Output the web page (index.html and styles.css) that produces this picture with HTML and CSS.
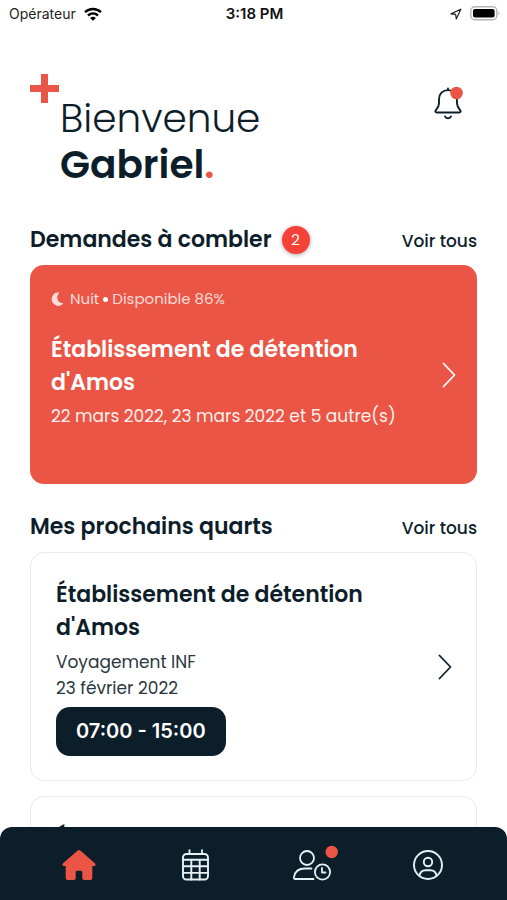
FILE: index.html
```html
<!DOCTYPE html>
<html lang="fr">
<head>
<meta charset="utf-8">
<meta name="viewport" content="width=device-width, initial-scale=1">
<title>Accueil</title>
<link rel="stylesheet" href="styles.css">
</head>
<body>
<div class="status">
  <div class="status-side">
    <span>Opérateur</span>
    <svg width="18" height="14" viewBox="0 0 18 14" aria-hidden="true">
      <g fill="none" stroke="#000" stroke-width="2.4">
        <path d="M1 5.200C5.500.9 12.500.9 17 5.200"/>
        <path d="M4 8.500c2.900-2.700 7.100-2.700 10 0"/>
      </g>
      <path d="M9 13.800 6.100 10.900c1.700-1.400 4.100-1.400 5.800 0z"/>
    </svg>
  </div>
  <strong class="clock">3:18 PM</strong>
  <div class="status-side status-end">
    <svg width="12" height="12" viewBox="0 0 12 12" fill="none" stroke="#222" stroke-width="1.200" stroke-linejoin="round" aria-hidden="true"><path d="M10.800 1.200 1 5.900l4.600.500.700 4.500z"/></svg>
    <svg width="30" height="15" viewBox="0 0 30 15" aria-hidden="true">
      <rect x=".8" y=".8" width="26" height="13" rx="4" fill="#fff" stroke="#b5b5b5" stroke-width="1.400"/>
      <rect x="3" y="3" width="21.600" height="8.600" rx="2"/>
      <path d="M28.400 5.200c1.400.6 1.400 3.600 0 4.200z" fill="#b5b5b5"/>
    </svg>
  </div>
</div>

<main class="content">
  <header class="welcome">
    <svg class="plus" width="29" height="29" viewBox="0 0 29 29" aria-hidden="true"><path d="M11 0h7v11h11v7H18v11h-7V18H0v-7h11z" fill="#ea5545"/></svg>
    <h1 class="greeting">Bienvenue<br><strong>Gabriel<span class="dot">.</span></strong></h1>
    <button class="bell" type="button" aria-label="Notifications">
      <svg width="30" height="34" viewBox="0 0 30 34" fill="none" stroke="#0d1e2b" stroke-width="1.900" stroke-linecap="round" stroke-linejoin="round" aria-hidden="true">
        <path d="M15 2.500v1.600M15 4.100c-5.400 0-9 3.900-9 9.100v4.200c0 3-1.300 4.600-3.100 6.700-1 1.200-.6 2.400.9 2.400h22.400c1.500 0 1.900-1.200.9-2.400-1.800-2.100-3.100-3.700-3.100-6.700v-4.200c0-5.200-3.600-9.100-9-9.100z"/>
        <path d="M12 30.500c.8 2.300 5.200 2.300 6 0"/>
        <circle cx="23.500" cy="7" r="6.300" fill="#ea5545" stroke="none"/>
      </svg>
    </button>
  </header>

  <section>
    <div class="section-head">
      <h2>Demandes à combler</h2>
      <span class="badge">2</span>
      <a href="#demandes">Voir tous</a>
    </div>
    <a class="card request" href="#demande">
      <div class="card-text">
        <p class="meta">
          <svg width="13" height="14" viewBox="0 0 13 14" aria-hidden="true"><path d="M8.500.6A6.600 6.600 0 1 0 12.600 11.200C7 11.600 3.900 5.200 8.500.6z" fill="#fbdcd8"/></svg>
          <span>Nuit</span><i class="sep"></i><span>Disponible 86%</span>
        </p>
        <h3>Établissement de détention d'Amos</h3>
        <p class="dates">22 mars 2022, 23 mars 2022 et 5 autre(s)</p>
      </div>
      <svg class="chevron" width="14" height="26" viewBox="0 0 14 26" fill="none" stroke="currentColor" stroke-width="1.800" stroke-linecap="round" stroke-linejoin="round" aria-hidden="true"><path d="m1.500 1.500 11 11.500-11 11.500"/></svg>
    </a>
  </section>

  <section>
    <div class="section-head">
      <h2>Mes prochains quarts</h2>
      <a href="#quarts">Voir tous</a>
    </div>
    <a class="card shift" href="#quart-1">
      <div class="card-text">
        <h3>Établissement de détention d'Amos</h3>
        <p class="detail">Voyagement INF<br>23 février 2022</p>
        <span class="hours">07:00 - 15:00</span>
      </div>
      <svg class="chevron" width="14" height="26" viewBox="0 0 14 26" fill="none" stroke="currentColor" stroke-width="1.800" stroke-linecap="round" stroke-linejoin="round" aria-hidden="true"><path d="m1.500 1.500 11 11.500-11 11.500"/></svg>
    </a>
    <a class="card shift" href="#quart-2">
      <div class="card-text">
        <h3>Établissement de détention d'Amos</h3>
      </div>
    </a>
  </section>
</main>

<nav class="tabs" aria-label="Navigation principale">
  <a href="#accueil" aria-label="Accueil" aria-current="page">
    <svg width="34" height="32" viewBox="0 0 34 32" fill="#ea5545" aria-hidden="true"><path d="M15.700 1.500a2 2 0 0 1 2.600 0L32.900 14.300c1.200 1.200.7 2.700-.9 2.700h-1.700v12c0 1.300-.8 2-2 2h-6c-1.200 0-2-.7-2-2v-5.500c0-1.100-.6-1.700-1.700-1.700h-3.200c-1.100 0-1.700.6-1.700 1.700V29c0 1.300-.8 2-2 2h-6c-1.200 0-2-.7-2-2V17H2c-1.600 0-2.100-1.500-.9-2.700z"/></svg>
  </a>
  <a href="#calendrier" aria-label="Calendrier">
    <svg width="28" height="32" viewBox="0 0 28 32" fill="none" stroke="#e6f1f6" stroke-width="1.900" stroke-linecap="round" aria-hidden="true">
      <rect x="2" y="5" width="25" height="25.500" rx="3.500"/>
      <path d="M2 10.700h25M2 17.300h25M2 23.900h25M10.300 10.700v19.800M18.700 10.700v19.800M8.500 1.300V5M21 1.300V5"/>
    </svg>
  </a>
  <a href="#disponibilites" aria-label="Disponibilités">
    <svg class="people" width="38" height="32" viewBox="0 0 38 32" fill="none" stroke="#e6f1f6" stroke-width="1.800" stroke-linecap="round" stroke-linejoin="round" aria-hidden="true">
      <circle cx="14" cy="9" r="7"/>
      <path d="M20.500 30H2c-1 0-1.200-.8-1-2C2 22 6.500 19.500 12 19.500h6.500"/>
      <circle cx="29.500" cy="23" r="7.600"/>
      <path d="M29 19v4.500h3.500"/>
      <circle cx="38.700" cy="3" r="6.200" fill="#ea5545" stroke="none"/>
    </svg>
  </a>
  <a href="#profil" aria-label="Profil">
    <svg width="32" height="32" viewBox="0 0 32 32" fill="none" stroke="#e6f1f6" stroke-width="1.900" aria-hidden="true">
      <circle cx="16" cy="16" r="14"/>
      <circle cx="16" cy="13" r="4.200"/>
      <path d="M7.500 27c.5-4 3.200-5.700 6-5.700h5c2.800 0 5.500 1.700 6 5.700"/>
    </svg>
  </a>
</nav>
</body>
</html>
```

FILE: styles.css
```css
* {
  box-sizing: border-box;
}

body {
  margin: 0;
  height: 100vh;
  display: flex;
  flex-direction: column;
  overflow: hidden;
  background: #fff;
  color: #0d1e2b;
  font-family: Poppins, Inter, sans-serif;
}

h1, h2, h3, p {
  margin: 0;
}

a {
  color: inherit;
  text-decoration: none;
}

svg {
  display: block;
  flex: none;
}

.status {
  display: flex;
  align-items: center;
  height: 27px;
  padding: 0 7px 0 9px;
  color: #222;
  font: 14px Inter, sans-serif;
}

.status-side {
  flex: 1;
  display: flex;
  align-items: center;
  gap: 8px;
}

.status-end {
  justify-content: flex-end;
}

.clock {
  color: #111;
  font-size: 15px;
  font-weight: 600;
}

.content {
  flex: 1;
  min-height: 0;
  overflow-y: auto;
  scrollbar-width: none;
  padding: 47px 30px 0;
}

.welcome {
  display: flex;
  align-items: flex-start;
  height: 148px;
}

.greeting {
  flex: 1;
  padding: 22px 0 0 1px;
  font-size: 39px;
  font-weight: 300;
  line-height: 46px;
}

.greeting strong {
  font-weight: 600;
}

.dot {
  color: #ea5545;
}

.bell {
  margin: 12px 14px 0 0;
  padding: 0;
  border: 0;
  background: none;
}

.section-head {
  display: flex;
  align-items: center;
  gap: 10px;
  height: 35px;
  margin-bottom: 8px;
}

.section-head h2 {
  font-size: 22px;
  font-weight: 600;
}

.section-head a {
  margin-left: auto;
  padding-top: 3px;
  font-size: 17px;
  font-weight: 500;
}

.badge {
  width: 28px;
  height: 28px;
  border-radius: 50%;
  background: #f44336;
  box-shadow: 0 1px 4px #0005;
  color: #fff;
  font-size: 15px;
  line-height: 28px;
  text-align: center;
}

.card {
  display: flex;
  align-items: center;
  border-radius: 14px;
}

.card-text {
  flex: 1;
}

.card h3 {
  max-width: 330px;
  font-size: 22px;
  font-weight: 600;
  line-height: 33px;
}

.request {
  min-height: 219px;
  margin-bottom: 25px;
  padding: 21px;
  background: #ea5545;
  color: #fff;
}

.request .card-text {
  align-self: flex-start;
}

.meta {
  display: flex;
  align-items: center;
  gap: 6px;
  margin-bottom: 21px;
  color: #fbdcd8;
  font-size: 15px;
  line-height: 26px;
}

.sep {
  width: 5px;
  height: 5px;
  margin: 0 -2px;
  border-radius: 50%;
  background: #fff;
}

.dates {
  padding-top: 4px;
  color: #fff0ed;
  font-size: 17px;
  line-height: 26px;
}

.shift {
  margin-bottom: 15px;
  padding: 25px 24px 24px 25px;
  border: 1px solid #e9e9e9;
}

.detail {
  padding: 5px 0 6px;
  color: #2b3740;
  font-size: 17px;
  line-height: 26px;
}

.hours {
  display: inline-block;
  padding: 0 20px;
  border-radius: 14px;
  background: #0d1e2b;
  color: #fff;
  font: 600 20px/49px Inter, sans-serif;
}

.tabs {
  display: flex;
  align-items: center;
  justify-content: space-around;
  height: 73px;
  padding: 2px 21px 0;
  border-radius: 12px 12px 0 0;
  background: #0d1e2b;
}

.tabs a {
  flex: 1;
  display: flex;
  justify-content: center;
}

.people {
  overflow: visible;
}
```
